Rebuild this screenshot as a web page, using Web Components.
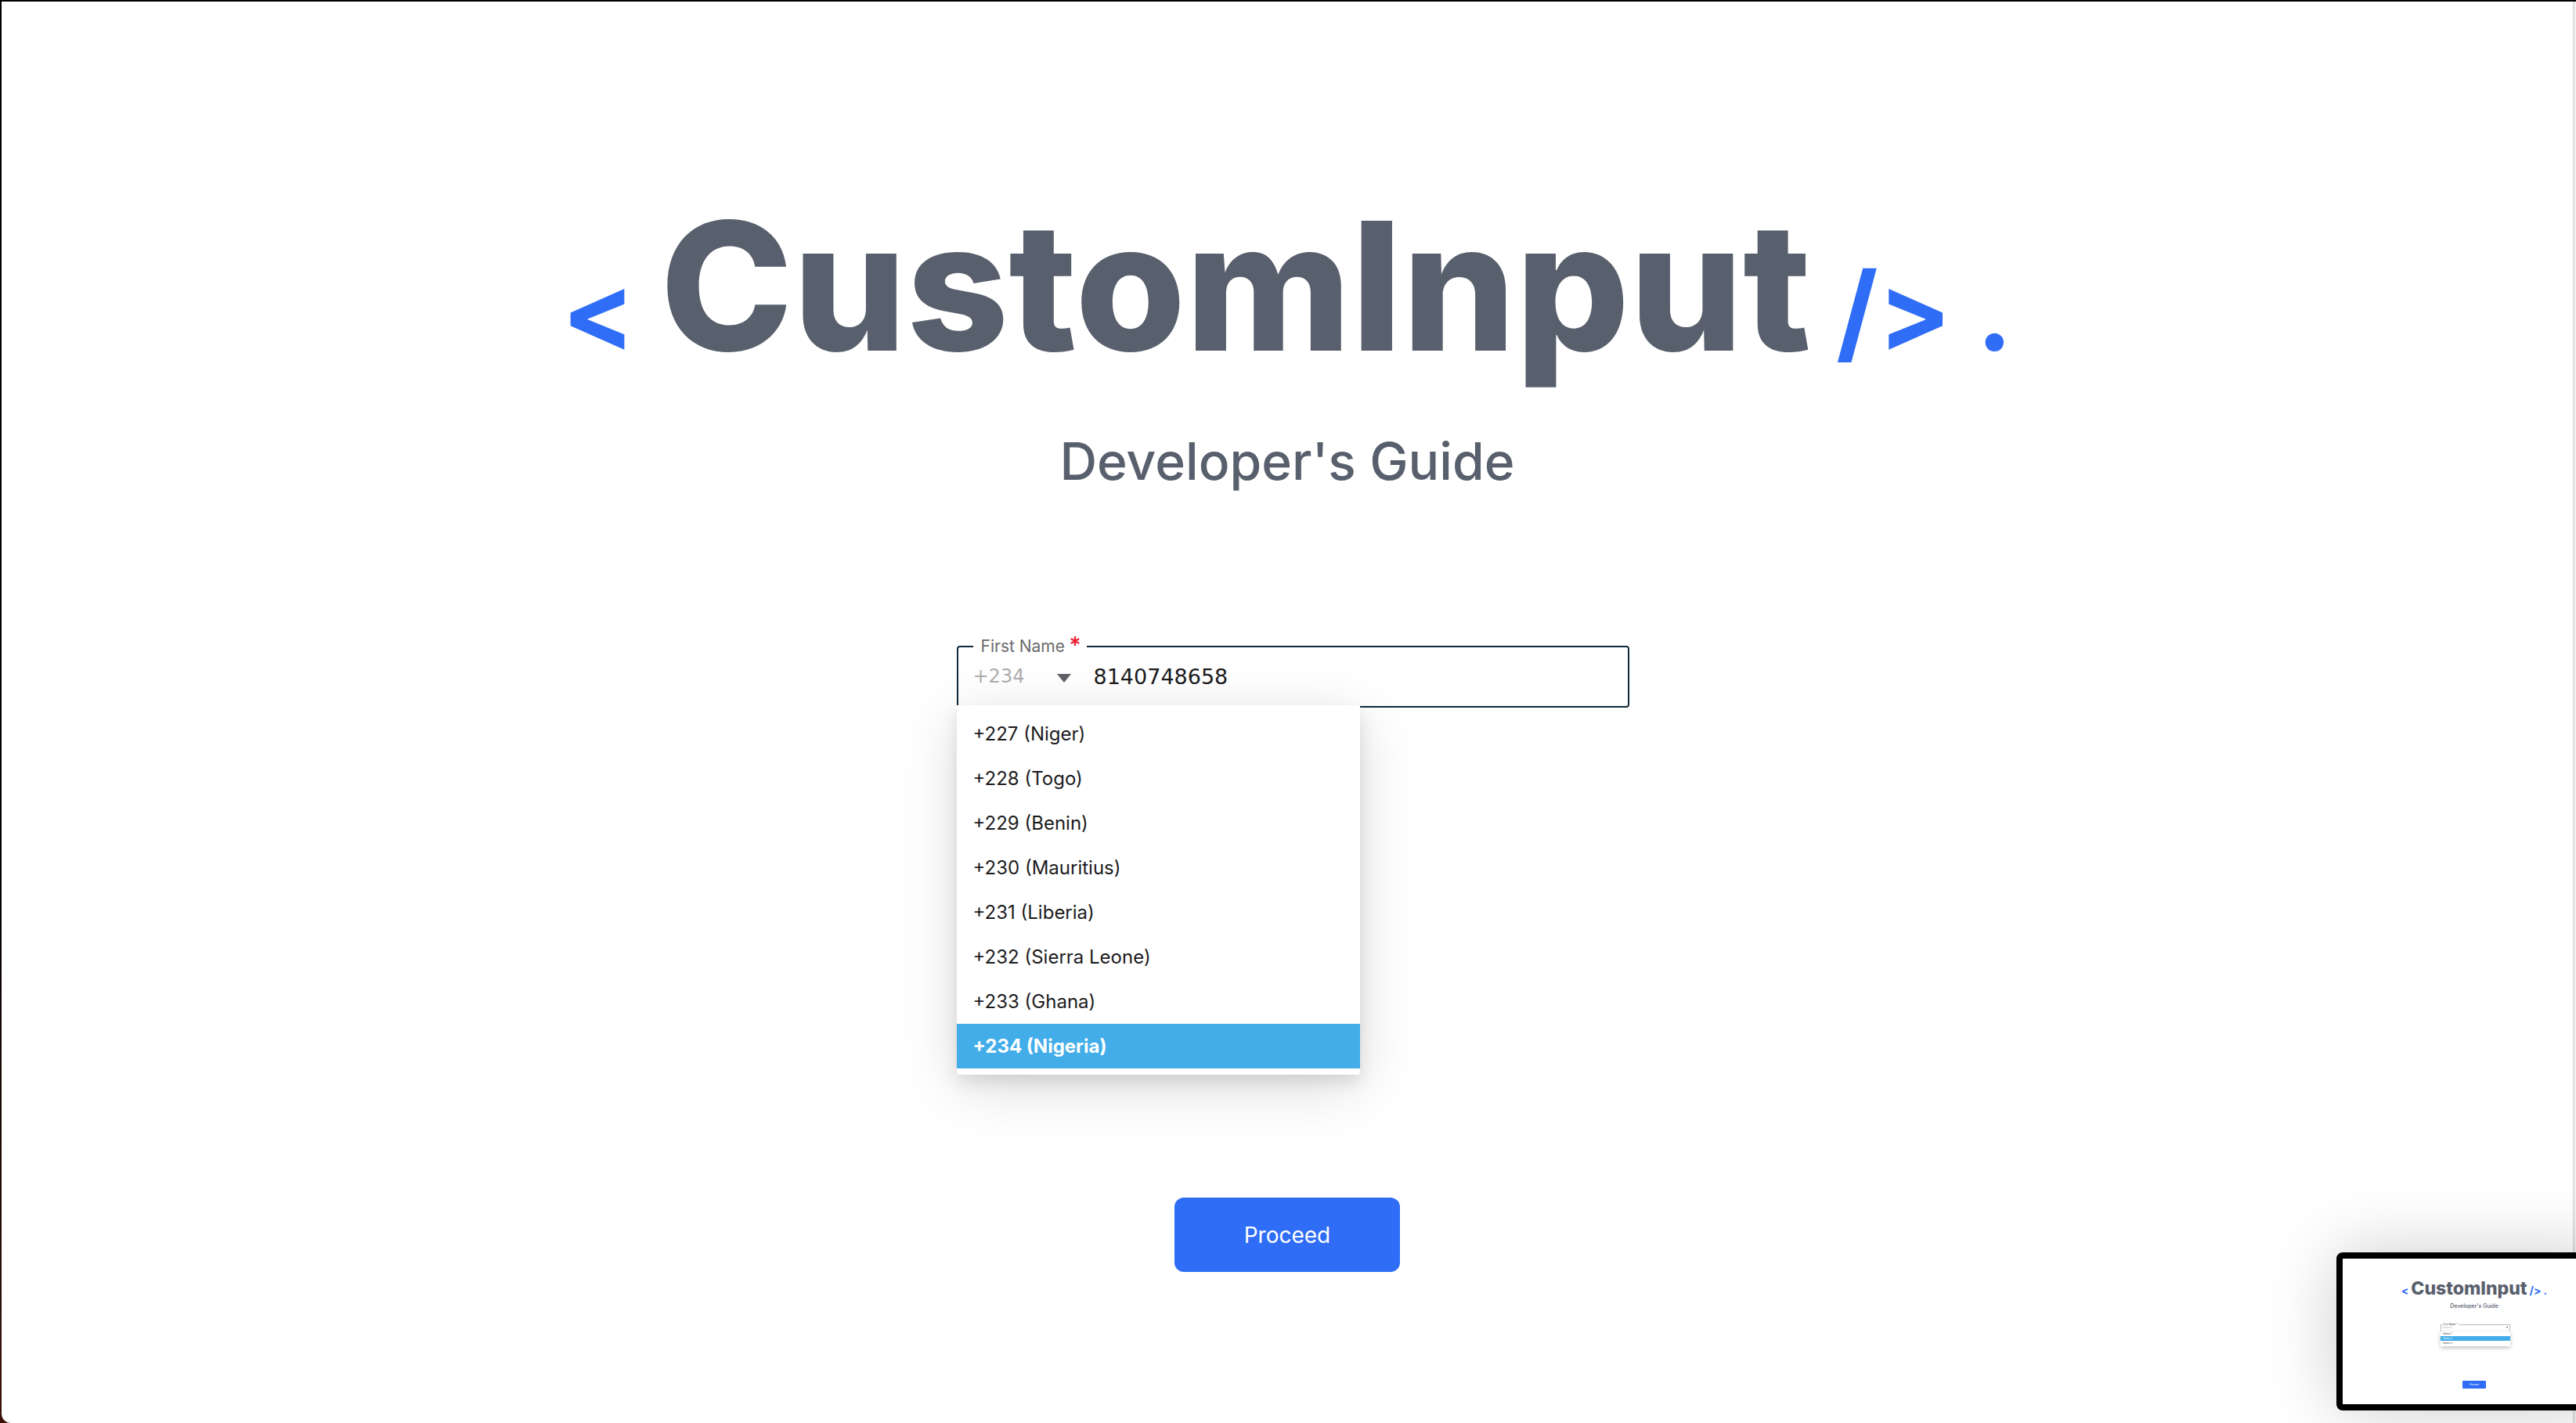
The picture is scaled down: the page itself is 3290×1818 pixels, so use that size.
<!DOCTYPE html>
<html lang="en">
<head>
<meta charset="utf-8">
<title>CustomInput Developer's Guide</title>
<style>
  html, body { margin: 0; height: 100%; }
  body {
    background: linear-gradient(#000 60%, #3a1208);
    font-family: Inter, "Open Sans", sans-serif;
    overflow: hidden;
  }
</style>
</head>
<body>
<guide-window>
  <guide-title>CustomInput</guide-title>
  <guide-subtitle>Developer's Guide</guide-subtitle>
  <phone-input label="First Name" code="+234" number="8140748658"></phone-input>
  <action-button>Proceed</action-button>
  <screen-preview slot="preview"></screen-preview>
</guide-window>

<script>
class Base extends HTMLElement {
  constructor() {
    super();
    this.attachShadow({ mode: 'open' });
  }
  connectedCallback() {
    this.shadowRoot.innerHTML = `<style>*{box-sizing:border-box}${this.css()}</style>${this.html()}`;
  }
}

customElements.define('guide-window', class extends Base {
  css() { return `
    :host { display: block; box-sizing: border-box; height: 100vh; padding: 2px 0 0 2px; }
    .frame { display: flex; height: 100%; background: #fff; border-bottom-left-radius: 12px; overflow: hidden; position: relative; }
    main { flex: 1; display: flex; flex-direction: column; align-items: center; padding-top: 243px; }
    .track { width: 4px; background: #f2f2f2; border-left: 2px solid #dcdcdc; }
  `; }
  html() { return `<div class="frame"><main><slot></slot></main><div class="track"></div><slot name="preview"></slot></div>`; }
});

customElements.define('guide-title', class extends Base {
  css() { return `
    :host { display: block; }
    h1 { margin: 0; display: flex; align-items: baseline; white-space: nowrap; gap: var(--title-gap, 32px);
      font-size: var(--title-size, 228px); line-height: var(--title-line, 240px); font-weight: 800; color: #59606d; }
    span { font-weight: 700; font-size: var(--mark-size, 138px); line-height: 1; color: #2f6df6; }
  `; }
  html() { return `<h1><span>&lt;</span><slot></slot><span>/&gt;</span><span>.</span></h1>`; }
});

customElements.define('guide-subtitle', class extends Base {
  css() { return `
    :host { display: block; margin-top: var(--subtitle-gap, 64px); }
    h2 { margin: 0; font-size: var(--subtitle-size, 66px); line-height: var(--subtitle-line, 80px); font-weight: 500; color: #59606d; }
  `; }
  html() { return `<h2><slot></slot></h2>`; }
});

customElements.define('code-option', class extends Base {
  css() { return `
    :host { display: block; padding: 0 21px; font-size: 24px; line-height: 57px; color: #1b1b1d; }
    :host([selected]) { background: #43adea; color: #fff; font-weight: 700; }
  `; }
  html() { return `<slot></slot>`; }
});

customElements.define('code-menu', class extends Base {
  css() { return `
    :host { display: block; box-sizing: border-box; padding: 8px 0; background: #fff; border-radius: 0 0 4px 4px;
      box-shadow: 0 10px 20px rgba(0,0,0,.10), 0 16px 76px rgba(0,0,0,.14); }
  `; }
  html() { return `<slot></slot>`; }
});

customElements.define('phone-input', class extends Base {
  css() { return `
    :host { display: block; position: relative; width: 859px; margin: 185px 0 626px 14px; }
    fieldset { margin: 0; padding: 0 0 0 19px; border: 2px solid #10293a; border-radius: 4px; height: 90px; min-width: 0; }
    legend { padding: 0 9px 0 10px; display: flex; gap: 7px; font-size: 21px; line-height: 24px; color: #6b6b6b; }
    legend svg { width: 12px; height: 12px; margin-top: -1px; }
    .row { display: flex; align-items: center; height: 52px; font-family: "DejaVu Sans", sans-serif; }
    select, input { appearance: none; border: 0; margin: 0; padding: 0; background: none; outline: 0; font-family: inherit; }
    select { width: 107px; font-size: 24px; color: #adadad; }
    .arrow { width: 18px; height: 11px; margin-top: 4px; }
    input { flex: 1; min-width: 0; padding-left: 29px; font-size: 27px; color: #1b1b1d; }
    code-menu { position: absolute; left: 0; top: 87px; width: 515px; }
  `; }
  html() {
    const names = ['Niger', 'Togo', 'Benin', 'Mauritius', 'Liberia', 'Sierra Leone', 'Ghana', 'Nigeria'];
    const opts = names.map((n, i) => `<code-option role="option"${i === 7 ? ' selected aria-selected="true"' : ''}>+${227 + i} (${n})</code-option>`).join('');
    return `<fieldset>
      <legend><label for="num">${this.getAttribute('label')}</label>
        <svg viewBox="0 0 12 12" aria-hidden="true"><path d="M6 0v12M.8 3l10.4 6M.8 9l10.4-6" stroke="#ea2234" stroke-width="2.3" fill="none"/></svg></legend>
      <div class="row">
        <select aria-label="Country code"><option>${this.getAttribute('code')}</option></select>
        <svg class="arrow" viewBox="0 0 18 11" aria-hidden="true"><path d="M0 0h18L9 11z" fill="#625e69"/></svg>
        <input id="num" type="tel" value="${this.getAttribute('number')}">
      </div>
    </fieldset>
    <code-menu role="listbox" aria-label="Country codes">${opts}</code-menu>`;
  }
});

customElements.define('action-button', class extends Base {
  css() { return `
    :host { display: block; }
    button { display: block; width: 288px; height: 95px; padding: 0; border: 0; border-radius: 12px; background: #2f6df6;
      color: #fff; font: 400 28px/36px Inter, sans-serif; }
  `; }
  html() { return `<button type="button"><slot></slot></button>`; }
});

customElements.define('screen-preview', class extends Base {
  css() { return `
    :host { display: flex; flex-direction: column; align-items: center; box-sizing: border-box; position: absolute; right: -46px; bottom: 16px;
      width: 352px; height: 202px; padding-top: 25px; background: #fff; border: 8px solid #000; border-radius: 8px;
      box-shadow: 0 0 90px rgba(0,0,0,.2);
      --title-size: 23px; --title-line: 26px; --mark-size: 14px; --title-gap: 3px;
      --subtitle-size: 7px; --subtitle-line: 9px; --subtitle-gap: 5px; }
    .field { width: 89px; margin: 17px 0 44px 3px; font-size: 3px; line-height: 6px; color: #333; }
    fieldset { margin: 0; padding: 0 2px; border: 1px solid #b5bcc2; border-bottom: 0; height: 11px; display: block; }
    legend { padding: 0 1px; line-height: 4px; }
    legend b { color: #ea2234; }
    .row { display: flex; justify-content: space-between; align-items: center; color: #aaa; line-height: 4px; }
    .row svg { width: 2px; height: 2px; }
    .menu { box-shadow: 0 2px 5px rgba(0,0,0,.25); padding-bottom: 1px; }
    .menu div { padding: 0 3px; }
    .menu .on { background: #43adea; color: #fff; }
    button { width: 30px; height: 10px; padding: 0; border: 0; border-radius: 1px; background: #2f6df6; color: #fff; font: 3px/10px Inter, sans-serif; }
  `; }
  html() { return `
    <guide-title>CustomInput</guide-title>
    <guide-subtitle>Developer's Guide</guide-subtitle>
    <div class="field">
      <fieldset><legend>First Name <b>*</b></legend>
        <div class="row"><span>Option 2</span><svg viewBox="0 0 2 2"><path d="M0 0h2L1 2z" fill="#444"/></svg></div></fieldset>
      <div class="menu"><div>Option 1</div><div class="on">Option 2</div><div>Option 3</div></div>
    </div>
    <button type="button">Proceed</button>`; }
});
</script>
</body>
</html>
